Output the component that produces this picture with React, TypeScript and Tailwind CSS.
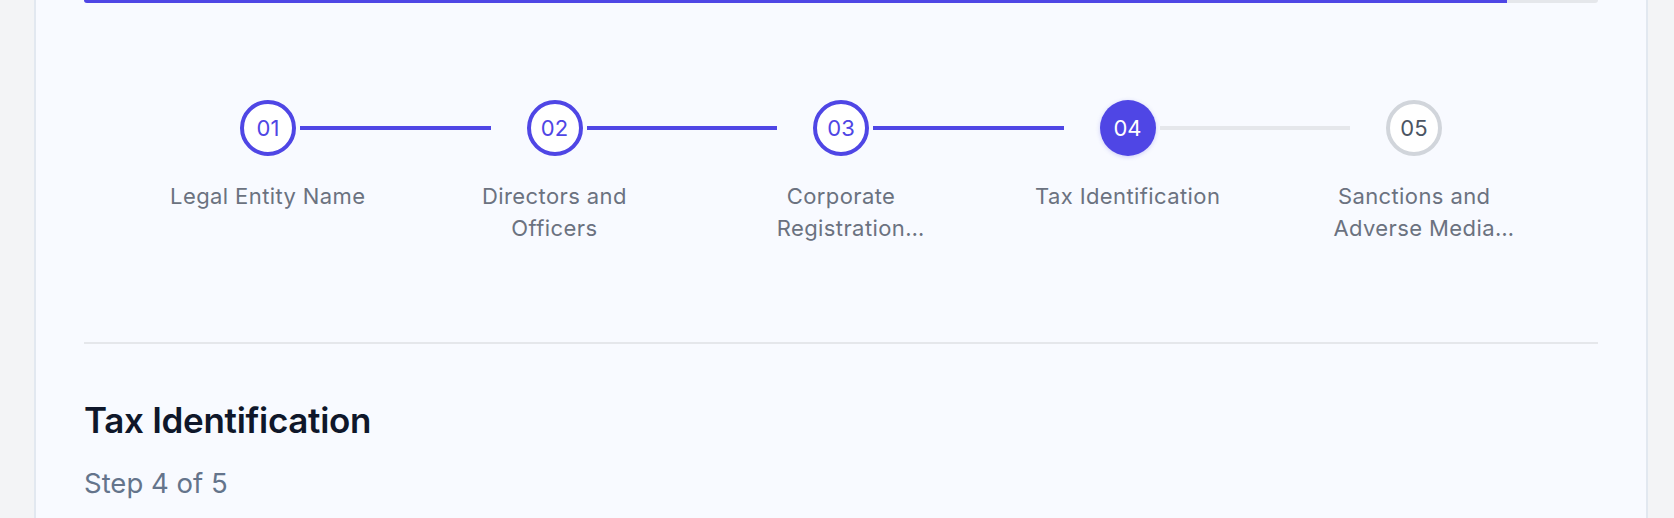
import React from "react";

const steps = [
  { n: "01", label: "Legal Entity Name", state: "done" },
  { n: "02", label: "Directors and Officers", state: "done" },
  { n: "03", label: "Corporate Registration Documents", state: "done" },
  { n: "04", label: "Tax Identification", state: "current" },
  { n: "05", label: "Sanctions and Adverse Media Screening", state: "todo" },
];

function Circle({ n, state }: { n: string; state: string }) {
  if (state === "current") {
    return (
      <div className="w-14 h-14 shrink-0 rounded-full bg-[#4f46e5] text-white flex items-center justify-center text-[22px] font-normal shadow-[0_1px_4px_rgba(79,70,229,0.25)]">
        {n}
      </div>
    );
  }
  if (state === "done") {
    return (
      <div className="w-14 h-14 shrink-0 rounded-full border-4 border-[#4f46e5] bg-white text-[#4f46e5] flex items-center justify-center text-[22px] font-normal">
        {n}
      </div>
    );
  }
  return (
    <div className="w-14 h-14 shrink-0 rounded-full border-4 border-[#d1d5db] bg-white text-[#4b5563] flex items-center justify-center text-[22px] font-normal">
      {n}
    </div>
  );
}

export default function App() {
  return (
    <div className="w-[1674px] h-[518px] overflow-hidden bg-[#f3f4f6] pl-[34px] pr-[26px] font-['Inter','Noto_Sans',sans-serif]">
      <div className="h-full bg-[#f8faff] border-x-2 border-[#e2e8f0] px-12">
        {/* progress bar */}
        <div className="h-[3px] w-full bg-[#e5e7eb] rounded-b-[3px] overflow-hidden">
          <div className="h-full bg-[#4f46e5]" style={{ width: "94%" }} />
        </div>

        {/* stepper circles row */}
        <div className="mt-[97px] mx-auto w-[1202px] flex items-center">
          {steps.map((s, i) => {
            const last = i === steps.length - 1;
            if (last) return <Circle key={s.n} n={s.n} state={s.state} />;
            const lineDone = steps[i + 1].state !== "todo";
            return (
              <div key={s.n} className="flex-1 flex items-center">
                <Circle n={s.n} state={s.state} />
                <div
                  className={
                    lineDone
                      ? "flex-1 h-1 ml-1 mr-9 bg-[#4f46e5]"
                      : "flex-1 h-1 ml-1 mr-9 bg-[#e5e7eb]"
                  }
                />
              </div>
            );
          })}
        </div>

        {/* labels row */}
        <div className="mt-6 mx-auto w-[1433px] grid grid-cols-5 h-16">
          {steps.map((s) => (
            <div key={s.n} className="flex justify-center">
              <p className="max-w-[224px] text-center text-[22px] leading-[32px] tracking-[0.4px] text-[#6b7280] line-clamp-2">
                {s.label}
              </p>
            </div>
          ))}
        </div>

        {/* section */}
        <div className="mt-[98px] border-t-2 border-[#e5e7eb] pt-12">
          <h2 className="text-[35px] leading-[56px] font-semibold tracking-[-0.3px] text-[#0f172a]">
            Tax Identification
          </h2>
          <p className="mt-[15px] text-[27.5px] leading-[40px] text-[#64748b]">Step 4 of 5</p>
        </div>
      </div>
    </div>
  );
}
